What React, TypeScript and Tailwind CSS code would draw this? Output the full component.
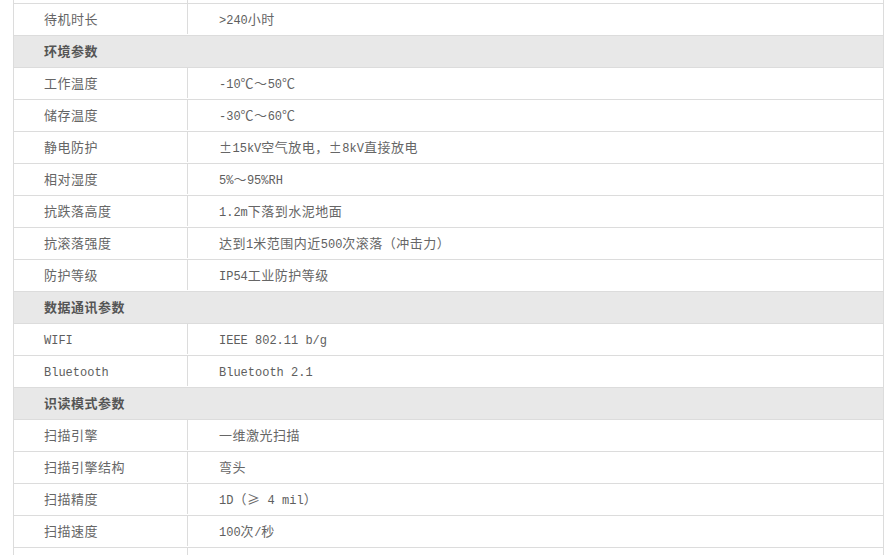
const rows: { label: string; value?: string; header?: boolean }[] = [
  { label: '待机时长', value: '>240小时' },
  { label: '环境参数', header: true },
  { label: '工作温度', value: '-10℃～50℃' },
  { label: '储存温度', value: '-30℃～60℃' },
  { label: '静电防护', value: '±15kV空气放电，±8kV直接放电' },
  { label: '相对湿度', value: '5%～95%RH' },
  { label: '抗跌落高度', value: '1.2m下落到水泥地面' },
  { label: '抗滚落强度', value: '达到1米范围内近500次滚落（冲击力）' },
  { label: '防护等级', value: 'IP54工业防护等级' },
  { label: '数据通讯参数', header: true },
  { label: 'WIFI', value: 'IEEE 802.11 b/g' },
  { label: 'Bluetooth', value: 'Bluetooth 2.1' },
  { label: '识读模式参数', header: true },
  { label: '扫描引擎', value: '一维激光扫描' },
  { label: '扫描引擎结构', value: '弯头' },
  { label: '扫描精度', value: '1D（≥ 4 mil）' },
  { label: '扫描速度', value: '100次/秒' },
  { label: '', value: '' },
];

// latin runs get a narrow monospace face, like the half-width glyphs of the original
function Mixed({ text }: { text: string }) {
  const parts = text.match(/[\x20-\x7e]+|[^\x20-\x7e]+/g) ?? [];
  return (
    <span>
      {parts.map((p, i) =>
        /^[\x20-\x7e]+$/.test(p) ? (
          <span
            key={i}
            className="text-[12px] tracking-normal text-[#5e5e5e]"
            style={{ fontFamily: '"Liberation Mono", monospace' }}
          >
            {p}
          </span>
        ) : (
          <span key={i}>{p}</span>
        )
      )}
    </span>
  );
}

export default function App() {
  return (
    <div className="h-[555px] w-[892px] overflow-hidden bg-white">
      <div
        className="ml-[13px] w-[871px] border-x border-[#dcdcdc] text-[13px] tracking-[0.5px] text-[#666]"
        style={{ fontFamily: '"Noto Sans CJK SC", "Noto Sans", sans-serif' }}
      >
        <div className="flex h-[4px] border-b border-[#dcdcdc]">
          <div className="w-[174px] border-r border-[#dcdcdc]" />
        </div>
        {rows.map((row, i) =>
          row.header ? (
            <div
              key={i}
              className="flex h-[32px] items-center border-b border-[#dcdcdc] bg-[#e8e8e8] pb-[1px] pl-[30px] font-bold text-[#555]"
            >
              {row.label}
            </div>
          ) : (
            <div key={i} className="flex h-[32px] border-b border-[#dcdcdc] pb-[1px]">
              <div className="flex w-[174px] items-center border-r border-[#dcdcdc] pl-[30px]">
                <Mixed text={row.label} />
              </div>
              <div className="flex flex-1 items-center whitespace-pre pl-[31px]">
                <Mixed text={row.value ?? ''} />
              </div>
            </div>
          )
        )}
      </div>
    </div>
  );
}
